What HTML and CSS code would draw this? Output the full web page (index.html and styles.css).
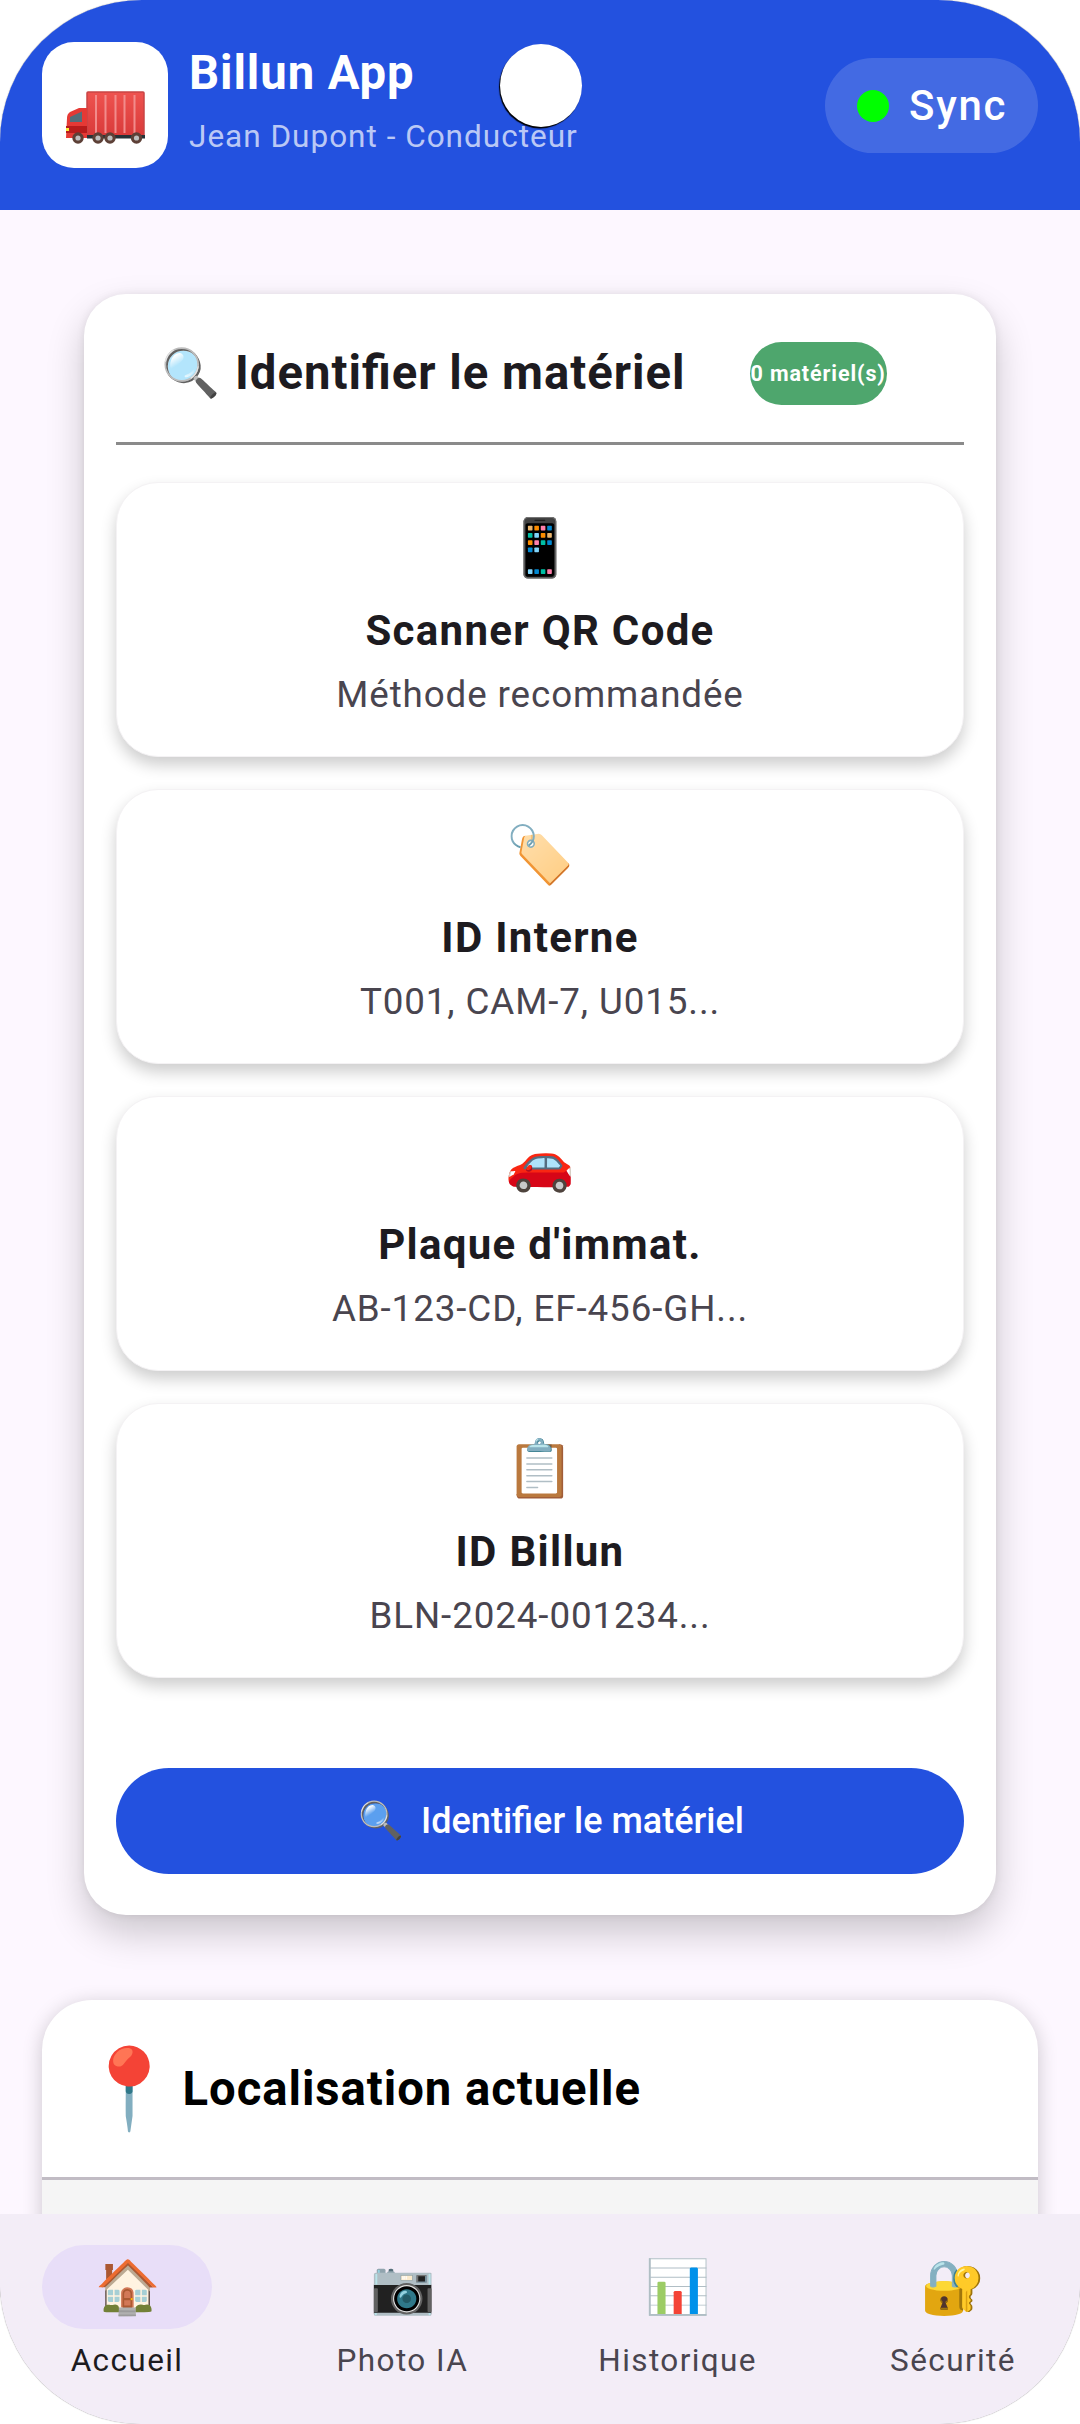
FILE: index.html
```html
<!doctype html>
<html lang="fr">
<head>
<meta charset="utf-8">
<title>Billun App</title>
<link rel="stylesheet" href="styles.css">
</head>
<body>
<div class="phone">
  <header class="topbar">
    <div class="logo">
      <svg class="logo-truck" viewBox="0 0 126 126" width="126" height="126" aria-hidden="true">
        <defs>
          <linearGradient id="box" x1="0" y1="0" x2="0" y2="1"><stop offset="0" stop-color="#ef5350"/><stop offset="1" stop-color="#d93a3a"/></linearGradient>
        </defs>
        <rect x="45" y="50" width="57" height="44" rx="1" fill="url(#box)" stroke="#c94545" stroke-width="1.5"/>
        <g fill="#f28b8b">
          <rect x="53" y="53" width="2" height="38"/>
          <rect x="62.5" y="53" width="2" height="38"/>
          <rect x="72.5" y="53" width="2" height="38"/>
          <rect x="81.5" y="53" width="2" height="38"/>
          <rect x="91.5" y="53" width="2" height="38"/>
        </g>
        <path d="M45 66H37L28 70Q25 72 25 76L24 96H45Z" fill="#e53935"/>
        <path d="M28 80V75L40 69.5V80Z" fill="#546e7a"/>
        <rect x="24" y="84" width="21" height="7" fill="#b71c1c"/>
        <rect x="24" y="86" width="3" height="3" fill="#ffeb3b"/>
        <rect x="45" y="93" width="58" height="3.5" fill="#263238"/>
        <g fill="#5d4037">
          <circle cx="36" cy="96" r="5.7"/><circle cx="56" cy="96" r="5.7"/><circle cx="68" cy="96" r="5.7"/><circle cx="94.5" cy="96" r="5.7"/>
        </g>
        <g fill="#bdbdbd">
          <circle cx="36" cy="96" r="2.6"/><circle cx="56" cy="96" r="2.6"/><circle cx="68" cy="96" r="2.6"/><circle cx="94.5" cy="96" r="2.6"/>
        </g>
      </svg>
    </div>
    <div class="brand">
      <div class="brand-title">Billun App</div>
      <div class="brand-sub">Jean Dupont - Conducteur</div>
    </div>
    <div class="sync"><span class="sync-dot"></span><span class="sync-label">Sync</span></div>
  </header>
  <div class="camera-hole"></div>
  <main class="content">
    <section class="panel">
      <div class="panel-head">
        <span class="panel-emoji">🔍</span>
        <h2 class="panel-title">Identifier le matériel</h2>
        <span class="chip">0 matériel(s)</span>
      </div>
      <div class="methods">
        <div class="method">
          <div class="method-emoji">📱</div>
          <div class="method-title">Scanner QR Code</div>
          <div class="method-sub">Méthode recommandée</div>
        </div>
        <div class="method">
          <div class="method-emoji">🏷️</div>
          <div class="method-title">ID Interne</div>
          <div class="method-sub">T001, CAM-7, U015...</div>
        </div>
        <div class="method">
          <div class="method-emoji">🚗</div>
          <div class="method-title">Plaque d'immat.</div>
          <div class="method-sub">AB-123-CD, EF-456-GH...</div>
        </div>
        <div class="method">
          <div class="method-emoji">📋</div>
          <div class="method-title">ID Billun</div>
          <div class="method-sub">BLN-2024-001234...</div>
        </div>
      </div>
      <button class="primary"><span class="primary-emoji">🔍</span><span class="primary-label">Identifier le matériel</span></button>
    </section>
    <section class="location">
      <div class="location-head">
        <span class="location-emoji">📍</span>
        <h2 class="location-title">Localisation actuelle</h2>
      </div>
      <div class="location-body"></div>
    </section>
  </main>
  <nav class="tabbar">
    <div class="tab active"><div class="tab-icon">🏠</div><div class="tab-label">Accueil</div></div>
    <div class="tab"><div class="tab-icon">📷</div><div class="tab-label">Photo IA</div></div>
    <div class="tab"><div class="tab-icon">📊</div><div class="tab-label">Historique</div></div>
    <div class="tab"><div class="tab-icon">🔐</div><div class="tab-label">Sécurité</div></div>
  </nav>
</div>
</body>
</html>
```
FILE: styles.css
```css
* { box-sizing: border-box; }
html, body { margin: 0; padding: 0; background: #fff; }
body { font-family: Roboto, "Noto Sans", sans-serif; font-feature-settings: "liga" 1; }

.phone {
  position: relative;
  width: 1080px;
  height: 2424px;
  border-radius: 142px;
  overflow: hidden;
  background: #fdf7ff;
  display: flex;
  flex-direction: column;
  box-shadow: 0 0 1px rgba(0,0,0,.7);
}

.topbar {
  flex: none;
  height: 210px;
  background: #2351df;
  display: flex;
  align-items: flex-start;
  padding: 42px 42px 0;
}
.logo {
  width: 126px;
  height: 126px;
  border-radius: 32px;
  background: #fff;
  overflow: hidden;
  flex: none;
}
.logo-truck { display: block; }
.brand { margin-left: 21px; flex: 1; }
.brand-title { font-size: 47.25px; font-weight: 700; color: #fff; line-height: 60px; margin-top: 1px; letter-spacing: .9px; }
.brand-sub { font-size: 31.5px; color: rgba(255,255,255,.7); line-height: 42px; letter-spacing: 1px; margin-top: 13px; }
.sync {
  margin-top: 16px;
  width: 213px;
  height: 95px;
  border-radius: 48px;
  background: rgba(255,255,255,.15);
  display: flex;
  align-items: center;
  padding-left: 32px;
  flex: none;
}
.sync-dot { width: 32px; height: 32px; border-radius: 50%; background: #0f0; flex: none; }
.sync-label { margin-left: 20px; font-size: 42px; font-weight: 500; color: #fff; letter-spacing: 1.7px; }

.camera-hole {
  position: absolute;
  left: 499.5px;
  top: 44px;
  width: 82px;
  height: 83px;
  border-radius: 50%;
  background: #fff;
  box-shadow: -1px 1.5px 1px #000;
}

.content {
  flex: 1;
  min-height: 0;
  overflow: hidden;
  padding: 84px 42px 0;
}

.panel {
  margin: 0 42px 85px;
  height: 1621px;
  background: #fff;
  border-radius: 42px;
  padding: 0 32px;
  box-shadow: 0 18px 38px rgba(0,0,0,.2), 0 0 8px rgba(0,0,0,.08);
}
.panel-head {
  height: 151px;
  border-bottom: 3px solid #8a8a8a;
  display: flex;
  align-items: center;
  padding: 10px 0 0 45px;
}
.panel-emoji { font-size: 47.25px; line-height: 60px; }
.panel-title { margin: 0 0 0 15px; font-size: 47.25px; font-weight: 700; color: #1d1b20; line-height: 60px; letter-spacing: 1px; }
.chip {
  margin-left: 64px;
  width: 137px;
  height: 63px;
  border-radius: 32px;
  background: #4ea66d;
  color: #fff;
  font-size: 21.5px;
  font-weight: 700;
  display: flex;
  align-items: center;
  justify-content: center;
  letter-spacing: .9px;
  white-space: nowrap;
  overflow: hidden;
}

.methods { display: flex; flex-direction: column; gap: 32px; margin-top: 37px; }
.method {
  height: 275px;
  background: #fff;
  border-radius: 42px;
  border: 1px solid #f4f2f4;
  box-shadow: 0 8px 16px rgba(0,0,0,.2);
  display: flex;
  flex-direction: column;
  align-items: center;
  padding-top: 31px;
}
.method-emoji { font-size: 56px; line-height: 68px; }
.method-title { font-size: 42px; font-weight: 700; color: #1d1b20; line-height: 55px; letter-spacing: 1.3px; margin-top: 21px; }
.method-sub { font-size: 36.75px; color: #49454f; line-height: 42px; letter-spacing: .9px; margin-top: 16px; }

.primary {
  display: flex;
  align-items: center;
  justify-content: center;
  width: 100%;
  height: 106px;
  margin-top: 90px;
  border: 0;
  border-radius: 53px;
  background: #2351df;
  color: #fff;
  font-family: inherit;
  padding: 0 0 0 22px;
}
.primary-emoji { font-size: 36.75px; line-height: 50px; }
.primary-label { margin-left: 17px; font-size: 36px; font-weight: 500; }

.location {
  background: #fff;
  border-radius: 50px 50px 0 0;
  box-shadow: 0 4px 20px rgba(0,0,0,.2);
}
.location-head {
  height: 180px;
  border-bottom: 3px solid #c1bcc4;
  display: flex;
  align-items: center;
  padding-left: 38px;
}
.location-emoji { font-size: 79px; line-height: 96px; }
.location-title { margin: 0 0 0 4.5px; font-size: 47.25px; font-weight: 700; color: #000; line-height: 60px; letter-spacing: .95px; }
.location-body { height: 100px; background: #f5f5f5; }

.tabbar {
  flex: none;
  position: relative;
  height: 210px;
  background: #f3edf7;
  display: flex;
  justify-content: space-between;
  padding: 31px 42px 0;
}
.tab { width: 170px; display: flex; flex-direction: column; align-items: center; }
.tab-icon {
  width: 170px;
  height: 84px;
  border-radius: 42px;
  display: flex;
  align-items: center;
  justify-content: center;
  font-size: 52.5px;
  line-height: 62px;
}
.active .tab-icon { background: #e8def8; }
.tab-label {
  margin-top: 17px;
  font-size: 31.5px;
  font-weight: 400;
  line-height: 30px;
  letter-spacing: 1.4px;
  color: #49454f;
  white-space: nowrap;
}
.active .tab-label { color: #1d1b20; }
```
